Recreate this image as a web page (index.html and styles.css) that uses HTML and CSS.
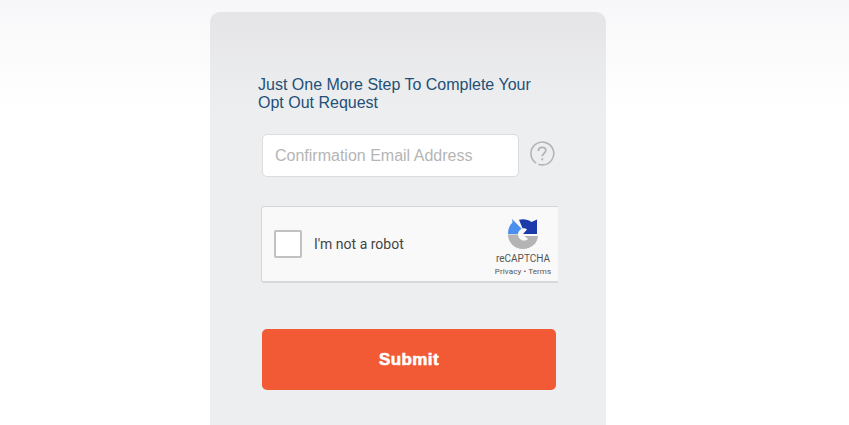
FILE: index.html
```html
<!DOCTYPE html>
<html lang="en">
<head>
<meta charset="utf-8">
<title>Opt Out</title>
<link rel="stylesheet" href="styles.css">
</head>
<body>
<main class="card">
  <h1 class="title">Just One More Step To Complete Your Opt Out Request</h1>
  <div class="email-row">
    <input class="email" type="text" placeholder="Confirmation Email Address">
    <svg class="help" width="26" height="26" viewBox="0 -0.5 26 26" aria-hidden="true">
      <path d="M7.200 22.600A11.400 11.400 0 1 1 13 24.400a11.300 11.300 0 0 1-3.600-.6" fill="none" stroke="#b4b4b4" stroke-width="1.600"/>
      <path d="M9.400 10.400c0-2.200 1.600-3.600 3.700-3.600s3.700 1.300 3.700 3.200c0 2.900-3.500 2.900-3.500 5.800" fill="none" stroke="#b4b4b4" stroke-width="1.800"/>
      <rect x="12.300" y="17.800" width="1.900" height="2" fill="#b4b4b4"/>
    </svg>
  </div>
  <div class="captcha">
    <span class="check"></span>
    <span class="robot">I'm not a robot</span>
    <div class="brand">
      <svg class="logo" width="32" height="32" viewBox="0 0 32 32" aria-hidden="true">
        <path d="M1 16.500H11C11.500 20 13.500 22.500 17 22.500C18.500 22.500 19.800 22 21 21L17.500 18H31C30.500 25.500 24 31 16 31C8 31 1 25 1 16.500Z" fill="#b4b4b4"/>
        <path d="M5 1L14.500 10.500L12.500 12.500C11.500 13.500 11 15 11 16H1C1 11 2.500 7.500 5.500 4.500Z" fill="#4a8ef0"/>
        <path d="M12 1.800C16.500 .5 21 1.500 24.500 4L30 1.500V16H16L20 11.500C19 10.500 17.500 10 15.500 10.200Z" fill="#1c3aa9"/>
      </svg>
      <span class="brand-name">reCAPTCHA</span>
      <span class="brand-links">Privacy • Terms</span>
    </div>
  </div>
  <button class="submit" type="button">Submit</button>
</main>
</body>
</html>
```
FILE: styles.css
```css
html, body {
  margin: 0;
  height: 425px;
  overflow: hidden;
}
body {
  background: linear-gradient(to bottom, #f7f7f9 0, #fbfbfc 50px, #fefefe 90px, #ffffff 120px);
  font-family: "Liberation Sans", Arial, sans-serif;
}
.card {
  box-sizing: border-box;
  width: 396px;
  height: 413px;
  margin: 12px 0 0 210px;
  padding: 64px 48px 0 48px;
  border-radius: 10px 10px 0 0;
  background: linear-gradient(to bottom, #e5e5e7 0, #edeeef 95px);
}
.title {
  margin: 0;
  width: 290px;
  font-size: 16px;
  font-weight: 400;
  line-height: 18px;
  color: #1e5078;
}
.email-row {
  display: flex;
  align-items: flex-start;
  margin: 22px 0 0 4px;
}
.email {
  box-sizing: border-box;
  width: 257px;
  height: 43px;
  padding: 0 12px;
  border: 1px solid #dcdcdc;
  border-radius: 5px;
  background: #fff;
  font: 16px "Liberation Sans", Arial, sans-serif;
  outline: none;
}
.email::placeholder {
  color: #b5b5b5;
  opacity: 1;
}
.help {
  margin: 6px 0 0 10px;
}
.captcha {
  box-sizing: border-box;
  display: flex;
  align-items: center;
  width: 297px;
  height: 77px;
  margin: 29px 0 0 3px;
  padding-left: 12px;
  border: 1px solid #d6d6d6;
  border-right: 0;
  border-bottom: 2px solid #d8d8d8;
  border-radius: 3px 0 0 3px;
  background: #f9f9f9;
}
.check {
  box-sizing: border-box;
  width: 28px;
  height: 28px;
  border: 2px solid #c1c1c1;
  border-radius: 2px;
  background: #fff;
}
.robot {
  margin-left: 12px;
  font: 14px Roboto, "Liberation Sans", sans-serif;
  color: #444;
}
.brand {
  display: flex;
  flex-direction: column;
  align-items: center;
  align-self: flex-start;
  margin: 0 3px 0 auto;
  width: 64px;
  color: #555;
}
.logo {
  margin-top: 11px;
}
.brand-name {
  margin-top: 2px;
  font: 10px/14px Roboto, "Liberation Sans", sans-serif;
}
.brand-links {
  font: 8px/12px Roboto, "Liberation Sans", sans-serif;
  letter-spacing: 0.1px;
}
.submit {
  display: block;
  width: 294px;
  height: 61px;
  margin: 46px 0 0 4px;
  padding: 0;
  border: 0;
  border-radius: 5px;
  background: #f25935;
  color: #fff;
  font: 900 17px "Liberation Sans", Arial, sans-serif;
  -webkit-text-stroke: 0.6px #fff;
  letter-spacing: 0.4px;
}
```
